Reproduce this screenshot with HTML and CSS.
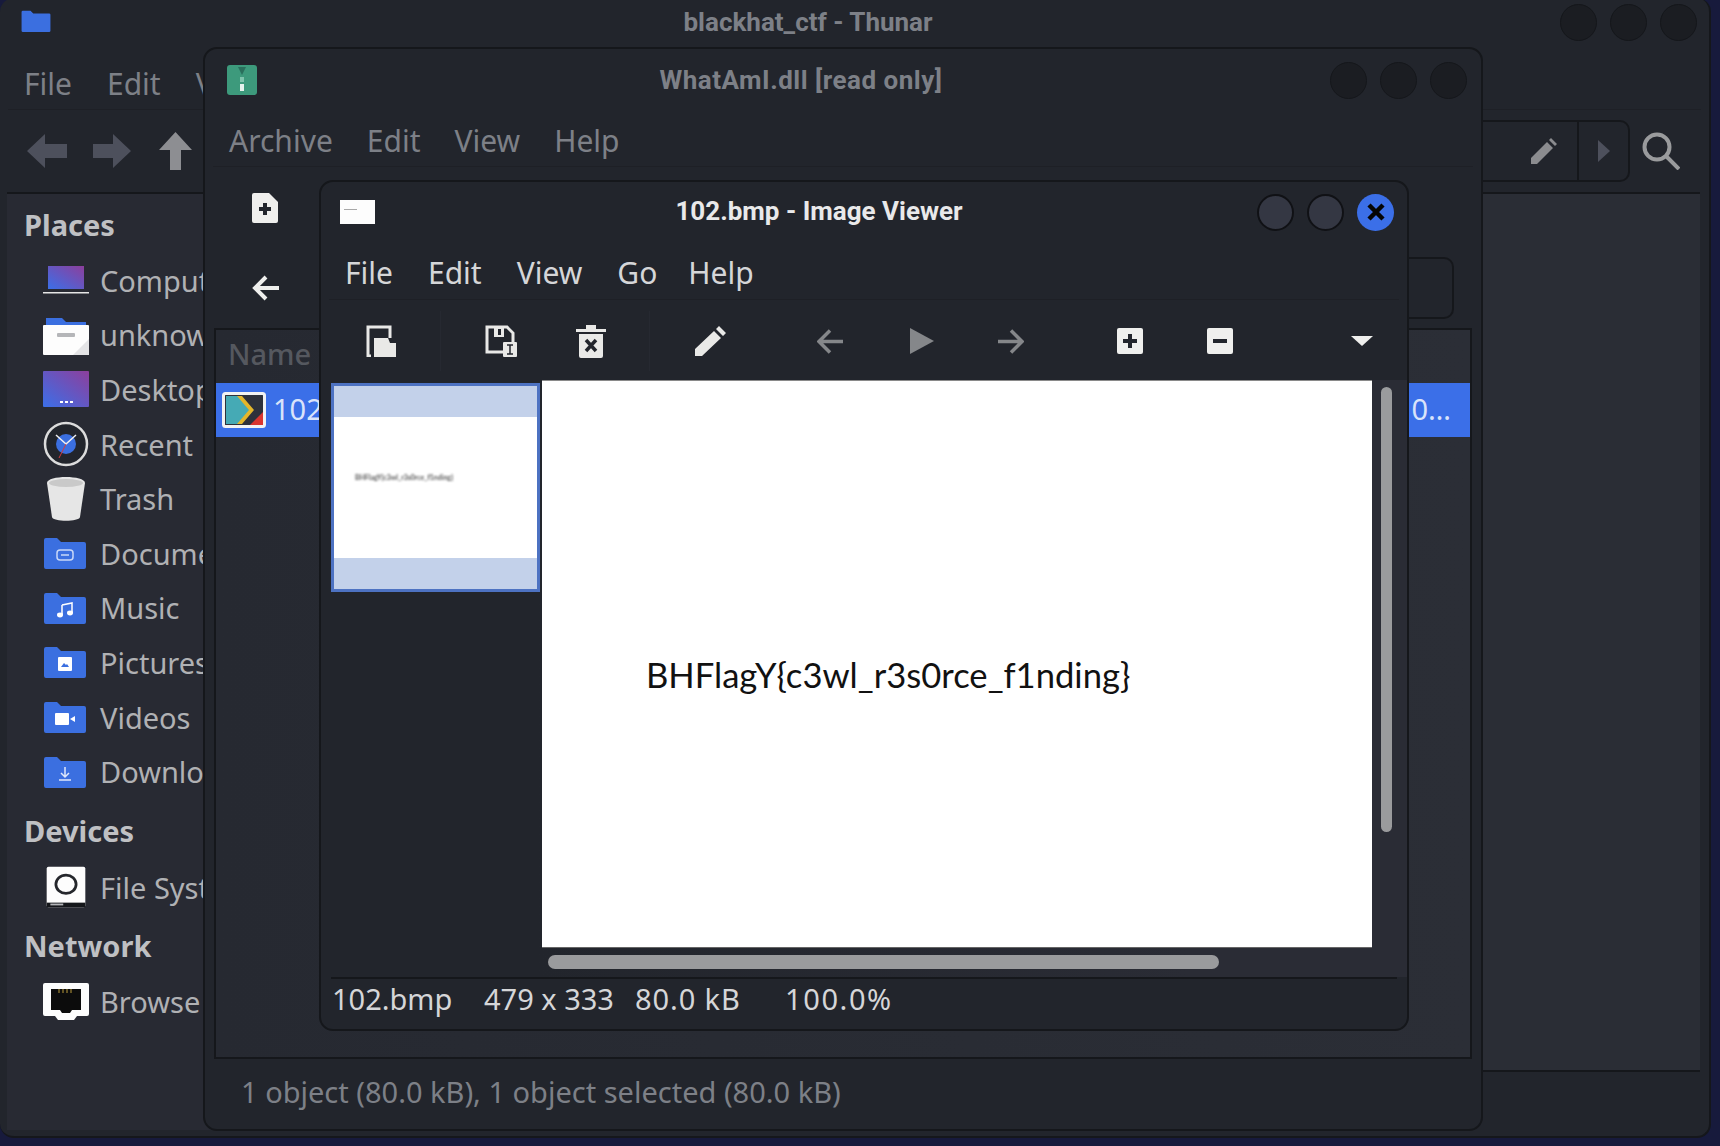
FILE: index.html
```html
<!DOCTYPE html>
<html lang="en">
<head>
  <meta charset="UTF-8" />
  <title>102.bmp - Image Viewer</title>
  <link rel="stylesheet" href="styles.css">
</head>
<body>
  <svg class="defs" width="0" height="0">
    <defs>
      <linearGradient id="violet" x1="0" y1="1" x2="1" y2="0">
        <stop offset="0" stop-color="#3b6fe8"/>
        <stop offset="1" stop-color="#8d3f9c"/>
      </linearGradient>
      <symbol id="folder" viewBox="0 0 44 32">
        <path d="M1 3a2 2 0 0 1 2-2h11l4 4h23a2 2 0 0 1 2 2v23a2 2 0 0 1-2 2H3a2 2 0 0 1-2-2z" fill="#3b6fe0"/>
      </symbol>
    </defs>
  </svg>

  <!-- file manager, at the back -->
  <section class="win thunar">
    <div class="titlebar thunar-title">
      <svg class="title-icon" width="32" height="22" viewBox="0 0 32 22"><use href="#folder"/></svg>
      <span class="title dim">blackhat_ctf - Thunar</span>
      <div class="wm-buttons wide">
        <i class="wm"></i><i class="wm"></i><i class="wm"></i>
      </div>
    </div>
    <nav class="menu thunar-menu dim">
      <span>File</span><span>Edit</span><span>View</span>
    </nav>
    <div class="thunar-tools">
      <svg width="40" height="34" viewBox="0 0 40 34"><path d="M0 17 18 0v10h22v14H18v10z" fill="#4d505c"/></svg>
      <svg width="38" height="34" viewBox="0 0 38 34"><path d="M38 17 20 0v10H0v14h20v10z" fill="#4d505c"/></svg>
      <svg class="up" width="33" height="38" viewBox="0 0 33 38"><path d="M16.500 0 33 18H22v20H11V18H0z" fill="#8d8e92"/></svg>
      <div class="pathbar">
        <svg class="path-edit" width="26" height="26" viewBox="0 0 26 26"><path d="M0 26v-6L16 4l6 6L6 26zM18 2l2-2 6 6-2 2z" fill="#8b8c8f"/></svg>
        <span class="path-next"><svg width="12" height="22" viewBox="0 0 12 22"><path d="M0 0l12 11L0 22z" fill="#4d505c"/></svg></span>
      </div>
      <svg class="search" width="38" height="38" viewBox="0 0 38 38"><circle cx="15" cy="15" r="12.500" fill="none" stroke="#9a9b9d" stroke-width="4"/><path d="M24 24l13 13" stroke="#9a9b9d" stroke-width="4"/></svg>
    </div>
    <div class="thunar-main">
      <aside class="sidebar">
        <h3>Places</h3>
        <div class="place">
          <svg width="46" height="32" viewBox="0 0 46 32"><rect x="5" y="2" width="36" height="23" fill="url(#violet)"/><rect y="28" width="46" height="1.500" fill="#e6e6e6"/></svg>
          <span>Computer</span>
        </div>
        <div class="place">
          <svg width="46" height="40" viewBox="0 0 46 40"><path d="M3 3h16l4 4h20v8H3z" fill="#3b6fe0"/><rect y="10" width="46" height="30" rx="1" fill="#fdfdfd"/><path d="M30 40l16-16v16z" fill="#e4e4e6"/><rect x="14" y="18" width="18" height="4" rx="1" fill="#b5b6b9"/></svg>
          <span>unknown</span>
        </div>
        <div class="place">
          <svg width="46" height="36" viewBox="0 0 46 36"><rect width="46" height="36" rx="1" fill="url(#violet)"/><rect x="17" y="30" width="3" height="2" fill="#fff"/><rect x="22" y="30" width="3" height="2" fill="#fff"/><rect x="27" y="30" width="3" height="2" fill="#fff"/></svg>
          <span>Desktop</span>
        </div>
        <div class="place">
          <svg width="46" height="46" viewBox="0 0 46 46"><circle cx="23" cy="23" r="21" fill="#22252c" stroke="#dcdcdc" stroke-width="2.500"/><circle cx="23" cy="23" r="10" fill="#3b6fe0"/><path d="M13 14l10 9 10-9" fill="none" stroke="#f0f0f0" stroke-width="1.500"/><path d="M23 23l-7 14" stroke="#d43a3a"/></svg>
          <span>Recent</span>
        </div>
        <div class="place">
          <svg width="40" height="44" viewBox="0 0 40 44"><path d="M1 6c0-8 38-8 38 0l-5 34c-1 5-27 5-28 0z" fill="#e6e6e6"/><ellipse cx="20" cy="6" rx="17" ry="4" fill="#c9c9c9"/></svg>
          <span>Trash</span>
        </div>
        <div class="place">
          <span class="folder">
            <svg width="44" height="32"><use href="#folder"/></svg>
            <svg class="glyph" width="18" height="12" viewBox="0 0 18 12"><rect x="1" y="1" width="16" height="10" rx="3" fill="none" stroke="#c9d8f8" stroke-width="1.500"/><path d="M5 6h8" stroke="#c9d8f8" stroke-width="1.500"/></svg>
          </span>
          <span>Documents</span>
        </div>
        <div class="place">
          <span class="folder">
            <svg width="44" height="32"><use href="#folder"/></svg>
            <svg class="glyph" width="16" height="16" viewBox="0 0 16 16"><path d="M5 3l10-2v10M5 3v10" fill="none" stroke="#fff" stroke-width="1.500"/><ellipse cx="3" cy="13" rx="3" ry="2.400" fill="#fff"/><ellipse cx="13" cy="11" rx="3" ry="2.400" fill="#fff"/></svg>
          </span>
          <span>Music</span>
        </div>
        <div class="place">
          <span class="folder">
            <svg width="44" height="32"><use href="#folder"/></svg>
            <svg class="glyph" width="14" height="14" viewBox="0 0 14 14"><rect width="14" height="14" rx="1" fill="#fff"/><path d="M3 10l3-4 2 2 1-1 2 3z" fill="#3b6fe0"/></svg>
          </span>
          <span>Pictures</span>
        </div>
        <div class="place">
          <span class="folder">
            <svg width="44" height="32"><use href="#folder"/></svg>
            <svg class="glyph" width="20" height="12" viewBox="0 0 20 12"><rect width="14" height="12" rx="1" fill="#fff"/><path d="M15 6l5-3v6z" fill="#fff"/></svg>
          </span>
          <span>Videos</span>
        </div>
        <div class="place">
          <span class="folder">
            <svg width="44" height="32"><use href="#folder"/></svg>
            <svg class="glyph" width="14" height="14" viewBox="0 0 14 14"><path d="M7 0v10M3 6l4 4 4-4M1 13h12" fill="none" stroke="#dfe8fb" stroke-width="1.500"/></svg>
          </span>
          <span>Downloads</span>
        </div>
        <h3 class="later">Devices</h3>
        <div class="place">
          <svg width="46" height="46" viewBox="-4 -3 50 50"><rect width="42" height="44" rx="2" fill="#fdfdfd"/><rect y="39" width="42" height="5" fill="#15171b"/><rect x="4" y="40" width="14" height="2" fill="#b5b6b9"/><ellipse cx="21" cy="19" rx="11" ry="10" fill="none" stroke="#25272c" stroke-width="3"/></svg>
          <span>File System</span>
        </div>
        <h3 class="later tight">Network</h3>
        <div class="place">
          <svg width="46" height="38" viewBox="0 0 46 38"><path d="M2 0h42a2 2 0 0 1 2 2v29a2 2 0 0 1-2 2H34l-3 4H15l-3-4H2a2 2 0 0 1-2-2V2a2 2 0 0 1 2-2z" fill="#fdfdfd"/><path d="M8 6h30v21H29l-2 3h-8l-2-3H8z" fill="#0c0c0c"/><path d="M16 6v4M20 6v4M24 6v4M28 6v4" stroke="#b99a3a"/></svg>
          <span>Browse Network</span>
        </div>
      </aside>
      <div class="thunar-right">
        <div class="thunar-view"></div>
      </div>
    </div>
  </section>

  <!-- archive manager -->
  <section class="win archive">
    <div class="titlebar archive-title">
      <svg class="title-icon" width="30" height="30" viewBox="0 0 30 30"><rect width="30" height="30" rx="3" fill="#3d9a7c"/><path d="M11 2h8l-4 8z" fill="#2a6f5c"/><rect x="13" y="12" width="4" height="5" fill="#7fc4ad"/><rect x="13" y="19" width="4" height="7" fill="#e6f3ee"/></svg>
      <span class="title dim">WhatAmI.dll [read only]</span>
      <div class="wm-buttons wide">
        <i class="wm"></i><i class="wm"></i><i class="wm"></i>
      </div>
    </div>
    <nav class="menu archive-menu dim">
      <span>Archive</span><span>Edit</span><span>View</span><span>Help</span>
    </nav>
    <div class="archive-tool">
      <svg width="26" height="30" viewBox="0 0 26 30"><path d="M2 0h15l9 9v19a2 2 0 0 1-2 2H2a2 2 0 0 1-2-2V2a2 2 0 0 1 2-2z" fill="#efefed"/><path d="M11 10h4v4h4v4h-4v4h-4v-4H7v-4h4z" fill="#22252c"/></svg>
    </div>
    <div class="archive-loc">
      <svg width="28" height="26" viewBox="0 0 28 26"><path d="M27 13H4M14 2 3 13l11 11" fill="none" stroke="#efefed" stroke-width="4"/></svg>
      <div class="loc-entry"></div>
    </div>
    <div class="filelist">
      <div class="list-head">Name</div>
      <div class="list-row">
        <svg width="44" height="36" viewBox="0 0 44 36"><rect x="1.500" y="1.500" width="41" height="33" rx="2" fill="#2e313b" stroke="#f2f2f2" stroke-width="3"/><path d="M4 4h13l12 14-12 14H4z" fill="#45aab5"/><path d="M15 4h5l12 14-12 14h-5l12-14z" fill="#e3b62c"/><path d="M41 20v13H28z" fill="#d9352f"/></svg>
        <span class="row-name">102.bmp</span>
        <span class="row-end">0…</span>
      </div>
    </div>
    <div class="archive-status dim">1 object (80.0 kB), 1 object selected (80.0 kB)</div>
  </section>

  <!-- image viewer, in front -->
  <section class="win viewer">
    <div class="titlebar viewer-title">
      <svg class="title-icon" width="35" height="24" viewBox="0 0 35 24"><rect width="35" height="24" fill="#fdfdfd"/><rect x="4" y="9" width="13" height="1" fill="#a8a8a8"/></svg>
      <span class="title bright">102.bmp - Image Viewer</span>
      <div class="wm-buttons">
        <i class="wm lit"></i><i class="wm lit"></i>
        <i class="wm close"><svg width="22" height="22" viewBox="0 0 22 22"><path d="M4 4l14 14M18 4 4 18" stroke="#050505" stroke-width="4.500"/></svg></i>
      </div>
    </div>
    <nav class="menu viewer-menu">
      <span>File</span><span>Edit</span><span>View</span><span class="go">Go</span><span>Help</span>
    </nav>
    <div class="viewer-tools">
      <div class="tool-group first">
        <svg width="30" height="32" viewBox="0 0 30 32"><path d="M5 31H2V2h22v11" fill="none" stroke="#e9e9e7" stroke-width="3"/><path d="M8 13h14l2 5h6v14H8z" fill="#e9e9e7"/></svg>
      </div>
      <div class="tool-group second">
        <svg width="32" height="32" viewBox="0 0 32 32"><path d="M18 27H2V2h20l6 6v9" fill="none" stroke="#e9e9e7" stroke-width="3"/><rect x="9" y="2" width="10" height="10" fill="#e9e9e7"/><rect x="13" y="4" width="3" height="6" fill="#22252c"/><rect x="18" y="17" width="14" height="15" rx="1" fill="#e9e9e7"/><path d="M22 20h6M25 20v9M22 29h6" stroke="#22252c" stroke-width="1.500"/></svg>
        <svg width="30" height="34" viewBox="0 0 30 34"><path d="M0 5h10V1h10v4h10v3H0zM3 10h24v22a2 2 0 0 1-2 2H5a2 2 0 0 1-2-2z" fill="#e9e9e7"/><path d="M10 16l10 11M20 16 10 27" stroke="#22252c" stroke-width="3.500"/></svg>
      </div>
      <div class="tool-group third">
        <svg class="edit" width="31" height="30" viewBox="0 0 31 30"><path d="M0 30v-7L19 5l7 7L7 30zM21 3l3-3 7 7-3 3z" fill="#e9e9e7"/></svg>
        <svg class="nav" width="26" height="25" viewBox="0 0 26 25"><path d="M26 12.500H3M13 1.500 2 12.500l11 11" fill="none" stroke="#85878a" stroke-width="3.500"/></svg>
        <svg class="nav play" width="24" height="26" viewBox="0 0 24 26"><path d="M0 0l24 13L0 26z" fill="#85878a"/></svg>
        <svg class="nav" width="26" height="25" viewBox="0 0 26 25"><path d="M0 12.500h23M13 1.500l11 11-11 11" fill="none" stroke="#85878a" stroke-width="3.500"/></svg>
        <svg class="zoom-in" width="26" height="26" viewBox="0 0 26 26"><rect width="26" height="26" rx="2" fill="#efefed"/><path d="M11 6h4v5h5v4h-5v5h-4v-5H6v-4h5z" fill="#22252c"/></svg>
        <svg class="zoom-out" width="26" height="26" viewBox="0 0 26 26"><rect width="26" height="26" rx="2" fill="#efefed"/><rect x="6" y="11" width="14" height="4" fill="#22252c"/></svg>
        <svg class="more" width="22" height="10" viewBox="0 0 22 10"><path d="M0 0h22L11 10z" fill="#efefed"/></svg>
      </div>
    </div>
    <div class="viewer-body">
      <div class="thumbs">
        <div class="thumb">
          <div class="thumb-page"><span>BHFlagY{c3wl_r3s0rce_f1nding}</span></div>
        </div>
      </div>
      <div class="canvas"><p>BHFlagY{c3wl_r3s0rce_f1nding}</p></div>
      <div class="vgutter"><div class="vbar"></div></div>
      <div class="hgutter"><div class="hbar"></div></div>
    </div>
    <div class="viewer-status">
      <span class="st-name">102.bmp</span><span class="st-size">479 x 333</span><span class="st-kb">80.0 kB</span><span class="st-zoom">100.0%</span>
    </div>
  </section>
</body>
</html>
```

FILE: styles.css
```css
* {
  box-sizing: border-box;
}
html, body {
  margin: 0;
  height: 100%;
}
body {
  position: relative;
  width: 1720px;
  height: 1146px;
  overflow: hidden;
  background: #171a3c;
  font-family: 'Noto Sans', sans-serif;
  font-size: 29px;
  color: #d5d6d8;
}
.defs {
  position: absolute;
}
svg {
  display: block;
  flex: none;
}

/* windows */
.win {
  position: absolute;
  display: flex;
  flex-direction: column;
  background: #22252c;
  border: 2px solid #15171b;
  border-radius: 14px;
  overflow: hidden;
}
.thunar {
  left: 0;
  top: -2px;
  width: 1711px;
  height: 1140px;
  border-top: 0;
  border-left: 0;
}
.archive {
  left: 203px;
  top: 47px;
  width: 1280px;
  height: 1084px;
}
.viewer {
  left: 319px;
  top: 180px;
  width: 1090px;
  height: 851px;
}
.titlebar {
  position: relative;
  display: flex;
  align-items: center;
  flex: none;
}
.title-icon {
  position: absolute;
}
.title {
  position: absolute;
  font-family: Roboto, sans-serif;
  font-size: 26px;
  font-weight: 700;
  white-space: nowrap;
  transform: translateX(-50%);
}
.dim {
  color: #7d8087;
}
.bright {
  color: #e9e9ea;
}
.wm-buttons {
  margin-left: auto;
  display: flex;
  gap: 13px;
}
.wm {
  display: flex;
  align-items: center;
  justify-content: center;
  width: 37px;
  height: 37px;
  border-radius: 50%;
  background: #1b1d22;
  border: 1px solid #15171b;
}
.wm.lit {
  background: #343743;
  border: 2px solid #101115;
}
.wm.close {
  background: #3b6fe8;
  border: 0;
}
.menu {
  display: flex;
  flex: none;
  align-items: center;
  font-size: 30px;
  border-bottom: 1px solid #1e2026;
}

/* thunar */
.thunar-title {
  height: 48px;
  padding-right: 12px;
}
.thunar-title .title-icon {
  left: 20px;
  top: 12px;
}
.thunar-title .title {
  left: 808px;
}
.thunar-menu {
  height: 64px;
  gap: 35px;
  margin: 0 8px;
  padding: 12px 0 0 16px;
}
.thunar-tools {
  display: flex;
  flex: none;
  align-items: center;
  height: 82px;
  padding-left: 27px;
  gap: 26px;
}
.thunar-tools .up {
  margin-left: 2px;
}
.pathbar {
  display: flex;
  align-items: center;
  justify-content: flex-end;
  margin-left: auto;
  width: 240px;
  height: 62px;
  border: 2px solid #15171b;
  border-radius: 10px;
}
.path-edit {
  margin-right: 20px;
}
.path-next {
  display: flex;
  align-items: center;
  justify-content: center;
  width: 51px;
  height: 100%;
  border-left: 2px solid #15171b;
}
.search {
  margin-left: -14px;
  margin-right: 29px;
}
.thunar-main {
  display: flex;
  flex: 1;
  margin: 0 9px 6px 7px;
  border-top: 2px solid #15171b;
}
.sidebar {
  width: 210px;
  padding-top: 1px;
  background: #282a33;
  color: #b0b1b4;
  white-space: nowrap;
}
.sidebar h3 {
  display: flex;
  align-items: center;
  height: 58px;
  margin: 0;
  padding-left: 17px;
  font-size: 29px;
  font-weight: 700;
  color: #bfc0c3;
}
.sidebar h3.later {
  margin-top: 3px;
}
.sidebar h3.tight {
  margin-top: 2px;
}
.place {
  display: flex;
  align-items: center;
  height: 54.600px;
}
.place > svg, .folder {
  margin-left: 36px;
  margin-right: 11px;
}
.place > svg {
  width: 46px;
}
.folder {
  position: relative;
  display: block;
  width: 44px;
  height: 32px;
  margin-right: 13px;
}
.folder .glyph {
  position: absolute;
  left: 50%;
  top: 18px;
  transform: translate(-50%, -50%);
}
.thunar-right {
  flex: 1;
}
.thunar-view {
  height: 878px;
  background: #2a2d35;
  border-bottom: 2px solid #15171b;
}

/* archive manager */
.archive-title {
  height: 62px;
  padding-right: 14px;
}
.archive-title .title-icon {
  left: 22px;
  top: 16px;
}
.archive-title .title {
  left: 596px;
  margin-top: -1px;
  letter-spacing: .5px;
}
.archive-menu {
  height: 56px;
  gap: 34px;
  margin: 0 8px;
  padding: 4px 0 0 16px;
}
.archive-tool {
  display: flex;
  flex: none;
  align-items: center;
  height: 81px;
  padding-left: 47px;
}
.archive-loc {
  display: flex;
  flex: none;
  align-items: center;
  height: 80px;
  padding-left: 47px;
}
.loc-entry {
  margin-left: auto;
  margin-right: 27px;
  width: 700px;
  height: 62px;
  border: 2px solid #15171b;
  border-radius: 10px;
}
.filelist {
  flex: 1;
  margin: 0 9px;
  background: linear-gradient(to right, #262931, #2b2e36);
  border: 2px solid #15171b;
}
.list-head {
  display: flex;
  align-items: center;
  height: 53px;
  padding: 0 0 6px 12px;
  color: #55585f;
  font-weight: 500;
}
.list-row {
  display: flex;
  align-items: center;
  height: 54px;
  padding-left: 6px;
  background: #3b6fe8;
  color: #d9e3fa;
}
.row-name {
  margin: -3px 0 0 7px;
}
.row-end {
  margin: -3px 19px 0 auto;
}
.archive-status {
  display: flex;
  flex: none;
  align-items: center;
  height: 70px;
  padding: 0 0 6px 36px;
}

/* image viewer */
.viewer-title {
  height: 60px;
  padding-right: 13px;
}
.viewer-title .title-icon {
  left: 19px;
  top: 18px;
}
.viewer-title .title {
  left: 498px;
  margin-top: -2px;
}
.viewer-menu {
  height: 58px;
  gap: 35px;
  margin: 0 8px;
  padding: 4px 0 0 16px;
}
.viewer-menu .go {
  margin-right: -4px;
}
.viewer-tools {
  display: flex;
  flex: none;
  align-items: center;
  height: 80px;
  padding: 2px 0 0 45px;
}
.tool-group {
  display: flex;
  align-items: center;
  height: 60px;
}
.tool-group.first {
  width: 75px;
  border-right: 1px solid #262931;
}
.tool-group.second {
  width: 209px;
  padding-left: 44px;
  gap: 59px;
  border-right: 1px solid #262931;
}
.tool-group.third {
  padding-left: 45px;
}
.edit {
  margin-right: 91px;
}
.play {
  margin: 0 64px 0 67px;
}
.zoom-in {
  margin-left: 93px;
}
.zoom-out {
  margin-left: 64px;
}
.more {
  margin-left: 118px;
}
.viewer-body {
  display: grid;
  flex: none;
  grid-template-columns: 221px 830px 1fr;
  grid-template-rows: 568px 29px;
  height: 597px;
  background: linear-gradient(to right, #22252c 20%, #2a2c35 80%);
}
.thumbs {
  grid-row: 1 / 3;
  padding: 3px 0 0 10px;
}
.thumb {
  display: flex;
  align-items: center;
  width: 209px;
  height: 209px;
  background: #c3d1ea;
  border: 3px solid #4d72c2;
}
.thumb-page {
  display: flex;
  align-items: center;
  width: 100%;
  height: 141px;
  padding: 0 0 22px 21px;
  background: #fff;
}
.thumb-page span {
  font-family: Lato, sans-serif;
  font-size: 6.900px;
  font-weight: 700;
  color: #555;
  white-space: nowrap;
  filter: blur(.9px);
}
.canvas {
  display: flex;
  align-items: center;
  background: #fff;
  border-top: 1px solid #8a8a8a;
  border-bottom: 1px solid #666;
}
.canvas p {
  margin: 21px 0 0 104px;
  font-family: Lato, 'Noto Sans', sans-serif;
  font-size: 34.600px;
  color: #111;
  white-space: nowrap;
}
.vgutter {
  padding: 7px 0 0 9px;
}
.vbar {
  width: 11px;
  height: 445px;
  border-radius: 6px;
  background: #9a9b9d;
}
.hgutter {
  grid-column: 2;
  padding: 7px 0 0 6px;
}
.hbar {
  width: 671px;
  height: 14px;
  border-radius: 7px;
  background: #9a9b9d;
}
.viewer-status {
  display: flex;
  flex: 1;
  align-items: center;
  margin: 0 10px;
  padding: 0 0 12px 1px;
  border-top: 2px solid #15171b;
}
.st-name {
  width: 152px;
}
.st-size {
  width: 151px;
}
.st-kb {
  width: 150px;
  letter-spacing: .9px;
}
.st-zoom {
  letter-spacing: 1.6px;
}
```
